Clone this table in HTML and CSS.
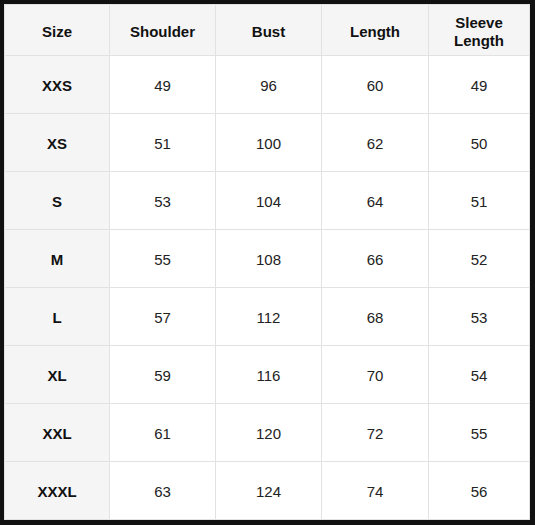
FILE: index.html
```html
<!DOCTYPE html>
<html>
<head>
<meta charset="utf-8">
<link rel="stylesheet" href="styles.css">
</head>
<body>
<div class="frame">
<table class="size-table">
  <colgroup>
    <col class="c1"><col class="c2"><col class="c3"><col class="c4"><col class="c5">
  </colgroup>
  <thead>
    <tr><th>Size</th><th>Shoulder</th><th>Bust</th><th>Length</th><th>Sleeve<br>Length</th></tr>
  </thead>
  <tbody>
    <tr><th>XXS</th><td>49</td><td>96</td><td>60</td><td>49</td></tr>
    <tr><th>XS</th><td>51</td><td>100</td><td>62</td><td>50</td></tr>
    <tr><th>S</th><td>53</td><td>104</td><td>64</td><td>51</td></tr>
    <tr><th>M</th><td>55</td><td>108</td><td>66</td><td>52</td></tr>
    <tr><th>L</th><td>57</td><td>112</td><td>68</td><td>53</td></tr>
    <tr><th>XL</th><td>59</td><td>116</td><td>70</td><td>54</td></tr>
    <tr><th>XXL</th><td>61</td><td>120</td><td>72</td><td>55</td></tr>
    <tr><th>XXXL</th><td>63</td><td>124</td><td>74</td><td>56</td></tr>
  </tbody>
</table>
</div>
</body>
</html>
```
FILE: styles.css
```css
html, body {
  margin: 0;
  padding: 0;
  background: #111111;
}
.frame {
  padding: 4px;
}
.size-table {
  border-collapse: collapse;
  table-layout: fixed;
  width: 525px;
  background: #ffffff;
  font-family: "Liberation Sans", Arial, sans-serif;
  font-size: 15px;
  color: #222222;
}
.c1 { width: 105px; }
.c2 { width: 106px; }
.c3 { width: 106px; }
.c4 { width: 107px; }
.c5 { width: 101px; }
.size-table th,
.size-table td {
  border: 1px solid #e2e2e2;
  text-align: center;
  vertical-align: middle;
  padding: 2px 0 0 0;
  line-height: 18px;
}
.size-table thead th {
  height: 47px;
  padding-top: 3px;
  background: #f5f5f5;
  font-weight: bold;
  color: #111111;
}
.size-table tbody tr {
  height: 58px;
}
.size-table tbody th {
  background: #f5f5f5;
  font-weight: bold;
  color: #111111;
}
.size-table td {
  font-weight: normal;
}
```
